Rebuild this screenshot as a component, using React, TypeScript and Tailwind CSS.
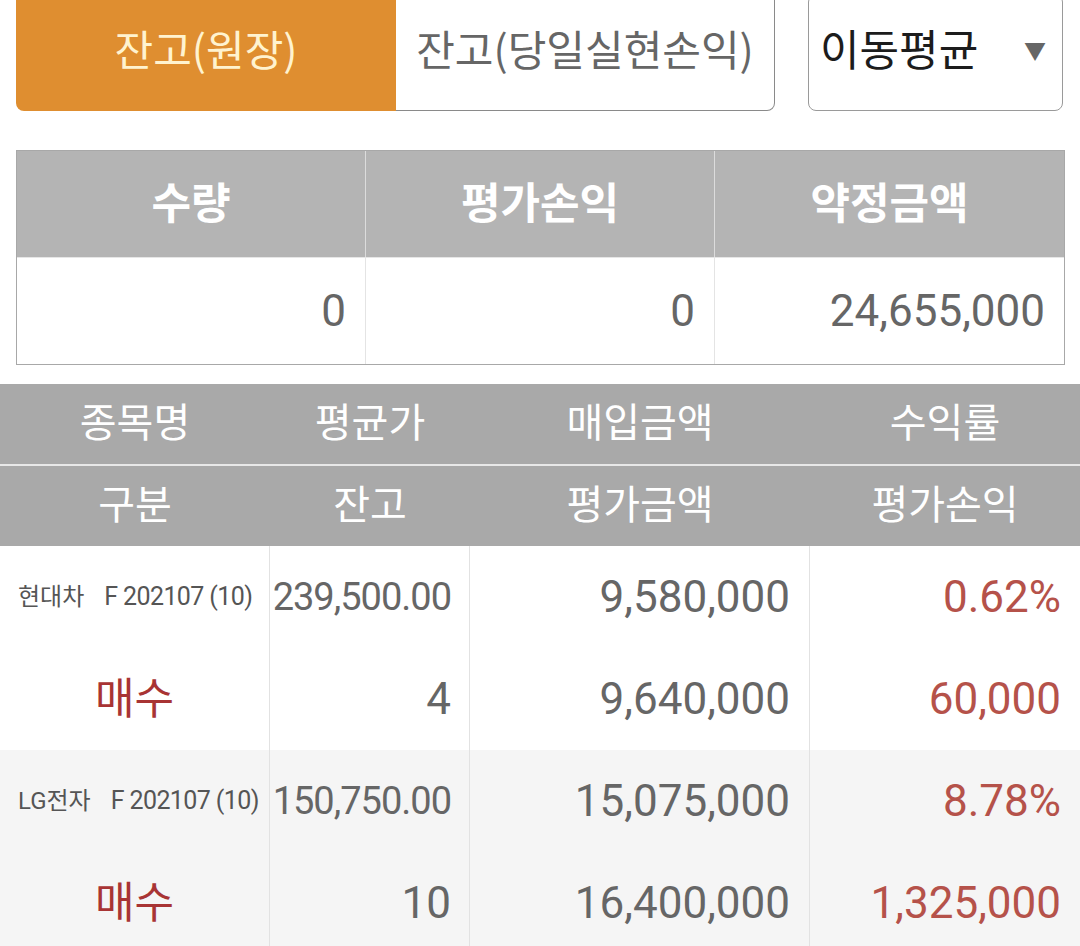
import React from "react";

const rows = [
  {
    name: "현대차",
    code: "F 202107 (10)",
    avg: "239,500.00",
    buy: "9,580,000",
    rate: "0.62%",
    side: "매수",
    qty: "4",
    evalAmt: "9,640,000",
    pl: "60,000",
    bg: "bg-white",
  },
  {
    name: "LG전자",
    code: "F 202107 (10)",
    avg: "150,750.00",
    buy: "15,075,000",
    rate: "8.78%",
    side: "매수",
    qty: "10",
    evalAmt: "16,400,000",
    pl: "1,325,000",
    bg: "bg-[#f5f5f5]",
  },
];

export default function App() {
  return (
    <div className="w-[1080px] h-[946px] overflow-hidden bg-white font-[Roboto,'Noto_Sans_CJK_KR',sans-serif]">
      {/* Top controls */}
      <div className="flex items-start pl-4 mt-[-6px]">
        <div className="flex w-[759px] h-[117px]">
          <div className="w-[380px] h-full bg-[#df8e30] rounded-bl-[8px] flex items-center justify-center text-[42px] text-[#fff3cf] pb-[10px] font-['Noto_Sans_CJK_KR',sans-serif]">
            잔고(원장)
          </div>
          <div className="flex-1 h-full border border-l-0 border-[#8a8a8a] rounded-br-[8px] flex items-center justify-center text-[42px] text-[#666666] pb-[10px] font-['Noto_Sans_CJK_KR',sans-serif]">
            잔고(당일실현손익)
          </div>
        </div>
        <div className="ml-[33px] w-[255px] h-[117px] border border-[#9a9a9a] rounded-[8px] flex items-center justify-between pl-[11px] pr-[16px] pb-[2px]">
          <span className="text-[43px] text-[#1c1c1c]">이동평균</span>
          <span className="text-[22px] text-[#666666]">▼</span>
        </div>
      </div>

      {/* Summary table */}
      <div className="mt-[39px] mx-4 w-[1049px] border border-[#a8a8a8]">
        <div className="grid grid-cols-3 h-[106px] bg-[#b4b4b4]">
          {["수량", "평가손익", "약정금액"].map((t, i) => (
            <div
              key={t}
              className={`flex items-center justify-center text-[43px] font-bold text-white ${i < 2 ? "border-r border-[#dcdcdc]" : ""}`}
            >
              {t}
            </div>
          ))}
        </div>
        <div className="grid grid-cols-3 h-[107px] bg-white border-t border-[#e6e6e6]">
          {["0", "0", "24,655,000"].map((t, i) => (
            <div
              key={i}
              className={`flex items-center justify-end pr-[19px] text-[44px] text-[#666666] ${i < 2 ? "border-r border-[#e4e4e4]" : ""}`}
            >
              {t}
            </div>
          ))}
        </div>
      </div>

      {/* Main table header */}
      <div className="mt-[19px] bg-[#a9a9a9]">
        <div className="grid grid-cols-[270px_200px_340px_270px] h-[80px] text-[40px] text-white">
          <div className="flex items-center justify-center">종목명</div>
          <div className="flex items-center justify-center">평균가</div>
          <div className="flex items-center justify-center">매입금액</div>
          <div className="flex items-center justify-center">수익률</div>
        </div>
        <div className="h-[2px] bg-[#e8e8e8]" />
        <div className="grid grid-cols-[270px_200px_340px_270px] h-[80px] text-[40px] text-white">
          <div className="flex items-center justify-center">구분</div>
          <div className="flex items-center justify-center">잔고</div>
          <div className="flex items-center justify-center">평가금액</div>
          <div className="flex items-center justify-center">평가손익</div>
        </div>
      </div>

      {/* Data rows */}
      {rows.map((r) => (
        <div
          key={r.name}
          className={`grid grid-cols-[270px_200px_340px_270px] h-[204px] ${r.bg}`}
        >
          <div className="flex flex-col border-r border-[#e2e2e2]">
            <div className="h-[102px] flex items-center pl-[18px] text-[#555555] whitespace-nowrap">
              <span className="text-[24px]">{r.name}</span>
              <span className="ml-[20px] text-[25px] tracking-[-0.6px]">{r.code}</span>
            </div>
            <div className="h-[102px] flex items-center justify-center text-[43px] text-[#a83434]">
              {r.side}
            </div>
          </div>
          <div className="flex flex-col border-r border-[#e2e2e2] pr-[18px]">
            <div className="h-[102px] flex items-center justify-end text-[38px] tracking-[-1px] text-[#666666] whitespace-nowrap">
              {r.avg}
            </div>
            <div className="h-[102px] flex items-center justify-end text-[44px] text-[#666666]">
              {r.qty}
            </div>
          </div>
          <div className="flex flex-col border-r border-[#e2e2e2] pr-[19px]">
            <div className="h-[102px] flex items-center justify-end text-[44px] text-[#666666]">
              {r.buy}
            </div>
            <div className="h-[102px] flex items-center justify-end text-[44px] text-[#666666]">
              {r.evalAmt}
            </div>
          </div>
          <div className="flex flex-col pr-[19px]">
            <div className="h-[102px] flex items-center justify-end text-[44px] text-[#b5524a]">
              {r.rate}
            </div>
            <div className="h-[102px] flex items-center justify-end text-[44px] text-[#b5524a]">
              {r.pl}
            </div>
          </div>
        </div>
      ))}
    </div>
  );
}
